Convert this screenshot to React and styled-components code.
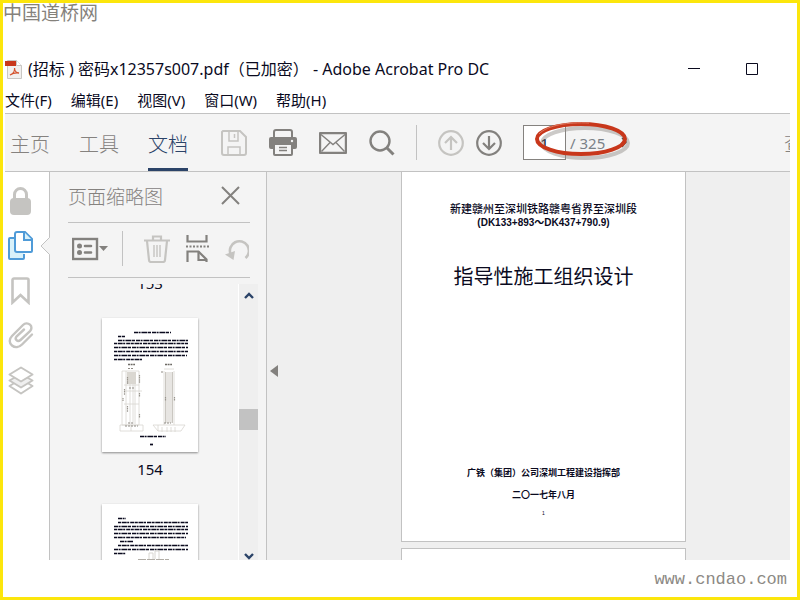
import React, {useState} from "react";
import styled, {createGlobalStyle} from "styled-components";

const GlobalStyle = createGlobalStyle`
  * {
    box-sizing: border-box;
  }
  body {
    margin: 0;
    background: white;
    font-family: "Noto Sans", "Noto Sans CJK SC", sans-serif;
    color: #0a0a1e;
  }
  button {
    font-family: inherit;
    color: inherit;
    background: none;
    border: none;
    padding: 0;
  }
  svg {
    display: block;
  }
  p, h1, h2 {
    margin: 0;
  }
`
const Frame = styled.div`
  display: flex;
  flex-direction: column;
  height: 100vh;
  border: 3px solid #fce60c;
  background: white;
`
const SiteName = styled.header`
  flex: none;
  height: 48px;
  font-size: 19px;
  line-height: 20px;
  color: #85827c;
`
const SiteUrl = styled.footer`
  flex: none;
  height: 37px;
  padding-right: 10px;
  text-align: right;
  font-family: "Liberation Mono", monospace;
  font-size: 17px;
  line-height: 40px;
  color: #8c8984;
`
const Window = styled.main`
  flex: 1;
  min-height: 0;
  display: flex;
  flex-direction: column;
  margin: 0 7px 0 2px;
`
const TitleBar = styled.div`
  display: flex;
  align-items: center;
  height: 36px;
  flex: none;
  padding-right: 9px;
`
const Title = styled.h1`
  flex: 1;
  margin-left: 5px;
  font-size: 16px;
  line-height: 34px;
  font-weight: 400;
  white-space: pre;
`
const WindowButton = styled.button`
  width: 58px;
  height: 36px;
  display: flex;
  align-items: center;
  justify-content: center;
`
const MenuBar = styled.nav`
  display: flex;
  flex: none;
  gap: 19px;
  height: 26px;
`
const MenuButton = styled.button`
  font-size: 15px;
  line-height: 26px;
`
const Toolbar = styled.div`
  display: flex;
  align-items: center;
  flex: none;
  height: 59px;
  padding-left: 5px;
  background: #f4f4f4;
  border-top: 1px solid #c2c2c2;
  border-bottom: 1px solid #c2c2c2;
`
const Tabs = styled.div`
  display: flex;
  align-self: stretch;
  gap: 29px;
  margin-right: 33px;
`
const Tab = styled.button`
  font-size: 20px;
  font-weight: 300;
  padding-top: 4px;
  color: ${({$active}) => $active ? '#2b4368' : '#85827f'};
  border-bottom: 3px solid ${({$active}) => $active ? '#2b4368' : 'transparent'};
`
const ToolGroup = styled.div`
  display: flex;
  align-items: center;
  gap: ${({$gap}) => $gap}px;
`
const IconButton = styled.button`
  position: relative;
  color: ${({$muted}) => $muted ? '#c5c4c1' : '#83817e'};
`
const Divider = styled.span`
  width: 1px;
  height: 35px;
  background: #c2c2c2;
  margin: 0 21px;
`
const PageNav = styled.label`
  position: relative;
  display: flex;
  align-items: center;
  margin-left: 21px;
  font-size: 15px;
  color: #7b8288;
`
const PageInput = styled.input`
  width: 43px;
  height: 35px;
  margin-right: 4px;
  padding: 0;
  border: 1px solid #85827f;
  background: white;
  text-align: center;
  font-family: inherit;
  font-size: 15px;
  color: #0a0a1e;
`
const Highlight = styled.svg`
  position: absolute;
  left: 8px;
  top: -6px;
  pointer-events: none;
`
const FindButton = styled.button`
  width: 6px;
  margin-left: auto;
  overflow: hidden;
  text-align: left;
  white-space: nowrap;
  font-size: 20px;
  font-weight: 300;
  color: #85827f;
`
const Body = styled.div`
  flex: 1;
  min-height: 0;
  display: flex;
`
const Rail = styled.nav`
  width: 45px;
  flex: none;
  padding-top: 6px;
  border-right: 1px solid #c2c2c2;
`
const RailButton = styled.button`
  position: relative;
  display: flex;
  align-items: center;
  justify-content: center;
  width: 31px;
  height: 45px;
  color: ${({$active}) => $active ? '#4f9bd8' : '#c5c4c1'};
`
const Notch = styled.svg`
  position: absolute;
  left: 35px;
  top: 14px;
`
const Panel = styled.aside`
  width: 217px;
  flex: none;
  display: flex;
  flex-direction: column;
  background: #f4f4f4;
  border-right: 1px solid #c2c2c2;
`
const PanelHeader = styled.div`
  display: flex;
  align-items: center;
  justify-content: space-between;
  flex: none;
  height: 51px;
  margin: 0 16px 0 18px;
  padding: 0 10px 3px 0;
  border-bottom: 1px solid #c2c2c2;
`
const PanelTitle = styled.h2`
  font-size: 19px;
  font-weight: 300;
  color: #85827f;
`
const PanelTools = styled.div`
  display: flex;
  align-items: center;
  gap: 16px;
  flex: none;
  height: 55px;
  margin: 0 16px 6px 18px;
  padding-left: 4px;
  padding-bottom: 3px;
  border-bottom: 1px solid #c2c2c2;
`
const ToolDivider = styled.span`
  width: 1px;
  height: 35px;
  background: #c2c2c2;
  margin: 0 5px 0 -2px;
`
const PanelContent = styled.div`
  flex: 1;
  min-height: 0;
  display: flex;
  padding-right: 8px;
`
const ThumbList = styled.div`
  flex: 1;
  overflow: hidden;
  padding-left: 12px;
`
const ThumbTrack = styled.div`
  display: flex;
  flex-direction: column;
  align-items: center;
  margin-top: -18px;
`
const ThumbPage = styled.div`
  width: 96px;
  height: 134px;
  flex: none;
  background: white;
  box-shadow: 0 1px 2px #8a8a8a;
`
const ThumbLabel = styled.p`
  height: 52px;
  flex: none;
  padding-top: 6px;
  font-size: 15px;
  line-height: 22px;
`
const ScrollBar = styled.div`
  display: flex;
  flex-direction: column;
  width: 20px;
  background: #efefef;
  border-left: 1px solid white;
  color: #2b4368;
`
const ScrollButton = styled.button`
  display: flex;
  justify-content: center;
  align-items: center;
  height: ${({$end}) => $end ? 8 : 22}px;
`
const ScrollSpace = styled.div`
  flex: ${({$size}) => $size};
`
const ScrollThumb = styled.div`
  height: 21px;
  background: #c2c2c2;
`
const Viewer = styled.section`
  flex: 1;
  min-width: 0;
  display: flex;
  background: #efefef;
`
const CollapseButton = styled.button`
  width: 30px;
  flex: none;
  padding: 10px 0 0 3px;
  color: #83817e;
`
const Pages = styled.div`
  flex: 1;
  display: flex;
  flex-direction: column;
  align-items: center;
  gap: 6px;
  overflow: hidden;
`
const Page = styled.article`
  width: 285px;
  height: 370px;
  flex: none;
  background: white;
  border: 1px solid #c2c2c2;
  border-top-width: ${({$first}) => $first ? 0 : 1}px;
  text-align: center;
`
const PageLine = styled.p`
  font-family: "Liberation Sans", "Noto Sans CJK SC", sans-serif;
  font-size: ${({$size}) => $size}px;
  line-height: 14px;
  font-weight: ${({$bold}) => $bold ? 700 : 500};
  margin-top: ${({$top}) => $top || 0}px;
`
const PageHeading = styled.h2`
  margin-top: 32px;
  font-family: "Noto Sans CJK SC", sans-serif;
  font-size: 20px;
  line-height: 28px;
  font-weight: 400;
`

const PdfIcon = () => (
    <svg width="18" height="19" viewBox="0 0 18 19">
        <path d="M2.500 .5h9l5 5v13h-14z" fill="#f1f0ef" stroke="#c9c7c4"/>
        <path d="M11.500 .5v5h5" fill="white" stroke="#c9c7c4"/>
        <path d="M0 1h11v5H0z" fill="#c8371b"/>
        <path d="M5 15c3-1 5-4 4.500-7 0 3 2 5 4.500 5-3-.4-6 0-9 2z" fill="none" stroke="#d4532f" strokeWidth="1.300"/>
    </svg>
)

const SaveIcon = () => (
    <svg width="26" height="26" viewBox="0 0 26 26" fill="none" stroke="currentColor" strokeWidth="2">
        <path d="M2 1h17l6 6v16a2 2 0 0 1-2 2H3a2 2 0 0 1-2-2V2z"/>
        <path d="M8 1v10h9V1M13.500 4v4" strokeWidth="1.500"/>
        <path d="M7 25v-8h12v8" strokeWidth="1.500"/>
    </svg>
)

const PrintIcon = () => (
    <svg width="28" height="28" viewBox="0 0 28 28">
        <path d="M5 10V3a2 2 0 0 1 2-2h14a2 2 0 0 1 2 2v7" fill="none" stroke="currentColor" strokeWidth="2"/>
        <path d="M2 8h24a2 2 0 0 1 2 2v8a2 2 0 0 1-2 2H2a2 2 0 0 1-2-2v-8a2 2 0 0 1 2-2z" fill="currentColor"/>
        <path d="M5 15h18v10a1 1 0 0 1-1 1H6a1 1 0 0 1-1-1z" fill="#f4f4f4" stroke="currentColor" strokeWidth="2"/>
        <path d="M10 18.500h8M10 21.500h8" stroke="currentColor" strokeWidth="1.500"/>
        <circle cx="23" cy="12" r="1.200" fill="#f4f4f4"/>
    </svg>
)

const MailIcon = () => (
    <svg width="28" height="22" viewBox="0 0 28 22" fill="none" stroke="currentColor">
        <rect x="1" y="1" width="26" height="20" rx="1" strokeWidth="2.400"/>
        <path d="M2 2.500l12 10 12-10M2.500 19.500l8.500-9M25.500 19.500l-8.500-9" strokeWidth="1.400"/>
    </svg>
)

const SearchIcon = () => (
    <svg width="26" height="26" viewBox="0 0 26 26" fill="none" stroke="currentColor">
        <circle cx="11" cy="11" r="9.500" strokeWidth="2.400"/>
        <path d="M17.500 17.500l7 7" strokeWidth="3"/>
    </svg>
)

const ArrowIcon = ({down}) => (
    <svg width="26" height="26" viewBox="0 0 26 26" fill="none" stroke="currentColor" strokeWidth="2.200">
        <circle cx="13" cy="13" r="11.800"/>
        {down
            ? <path d="M13 6v13M7 13l6 6 6-6"/>
            : <path d="M13 20V7M7 13l6-6 6 6"/>}
    </svg>
)

const LockIcon = () => (
    <svg width="21" height="28" viewBox="0 0 21 28">
        <path d="M4.500 13V7.500a6 6 0 0 1 12 0V13" fill="none" stroke="currentColor" strokeWidth="3"/>
        <rect y="11" width="21" height="17" rx="4" fill="currentColor"/>
    </svg>
)

const PagesIcon = () => (
    <svg width="25" height="29" viewBox="0 0 25 29" fill="none" stroke="currentColor" strokeWidth="2">
        <path d="M6 7H2a1 1 0 0 0-1 1v19a1 1 0 0 0 1 1h13a1 1 0 0 0 1-1v-4" fill="#d8f1fa"/>
        <path d="M9 1h8l7 7v12a1 1 0 0 1-1 1H9a2 2 0 0 1-2-2V3a2 2 0 0 1 2-2z" fill="white"/>
        <path d="M16 1v8h8" fill="#d8f1fa"/>
    </svg>
)

const BookmarkIcon = () => (
    <svg width="19" height="28" viewBox="0 0 19 28" fill="none" stroke="currentColor" strokeWidth="2.600">
        <path d="M3 1.500h13a1.500 1.500 0 0 1 1.500 1.500v22.500l-8-7.500-8 7.500V3A1.500 1.500 0 0 1 3 1.500z"/>
    </svg>
)

const ClipIcon = () => (
    <svg width="26" height="28" viewBox="0 0 26 28" fill="none" stroke="currentColor" strokeWidth="2.400" strokeLinecap="round">
        <path d="M24 12.500l-10 10c-3 3-7 3.500-10 1s-3-6.500 0-9.500L15 3c2-2 5-2 7-.3s1.800 4.600 0 6.500L12.500 18c-1.300 1.200-3 1.200-4 .2s-1-2.600.2-3.900L16 7.500"/>
    </svg>
)

const LayersIcon = () => (
    <svg width="26" height="29" viewBox="0 0 26 29" fill="white" stroke="currentColor" strokeWidth="2" strokeLinejoin="round">
        <path d="M1.500 20L13 13l11.500 7L13 27.500z"/>
        <path d="M1.500 14.500L13 8l11.500 6.500L13 21.500z" fill="#efefef"/>
        <path d="M1.500 8.500L13 1.500l11.500 7L13 15.500z"/>
    </svg>
)

const OptionsIcon = () => (
    <svg width="36" height="24" viewBox="0 0 36 24">
        <rect x="1" y="2" width="24" height="20" fill="none" stroke="currentColor" strokeWidth="2.400"/>
        <circle cx="7.500" cy="9" r="2.500" fill="currentColor"/>
        <circle cx="7.500" cy="15.500" r="2.500" fill="currentColor"/>
        <path d="M13 9h6M13 15.500h6" stroke="currentColor" strokeWidth="2.600" strokeLinecap="round"/>
        <path d="M27 9h9l-4.500 5z" fill="currentColor"/>
    </svg>
)

const TrashIcon = () => (
    <svg width="26" height="28" viewBox="0 0 26 28" fill="none" stroke="currentColor" strokeWidth="2.200">
        <path d="M0 5.500h26M9 5V1.500h8V5"/>
        <path d="M3 6l2 19a2 2 0 0 0 2 2h12a2 2 0 0 0 2-2l2-19"/>
        <path d="M10 10v12M13 10v12M16 10v12" strokeWidth="1.400"/>
    </svg>
)

const SplitIcon = () => (
    <svg width="23" height="27" viewBox="0 0 23 27" fill="none" stroke="currentColor" strokeWidth="2.200">
        <path d="M1.500 0v6.500h19V0"/>
        <path d="M0 11.500h23" strokeDasharray="2 1.500" strokeWidth="2"/>
        <path d="M1.500 27V16.500h11l8 8V27"/>
        <path d="M12.500 16.500V25h8.500"/>
    </svg>
)

const UndoIcon = () => (
    <svg width="24" height="24" viewBox="0 0 24 24">
        <path d="M5.500 17A9.500 9.500 0 1 1 20.500 21" fill="none" stroke="currentColor" strokeWidth="2.600"/>
        <path d="M0 17.500l10-3.500-1.500 9z" fill="currentColor"/>
    </svg>
)

const Chevron = ({down}) => (
    <svg width="10" height="7" viewBox="0 0 10 7" fill="none" stroke="currentColor" strokeWidth="2.400">
        <path d={down ? "M1 1l4 4 4-4" : "M1 6l4-4 4 4"}/>
    </svg>
)

// rows of greeked text: [x, y, width]
const pageRows = [
    [32, 14, 37], [16, 18, 7], [16, 22, 70], [12, 25, 74], [12, 29, 74],
    [12, 33, 74], [12, 37, 73], [12, 41, 28], [38, 118, 26], [48, 126, 3],
]
const nextRows = [
    [16, 14, 8], [16, 18, 70], [12, 22, 74], [12, 25, 74], [12, 29, 74],
    [12, 33, 72], [18, 37, 13], [16, 41, 70], [12, 45, 74], [12, 49, 12],
]

const Rows = ({rows}) => rows.map(([x, y, width], i) => (
    <g key={y} stroke="#0a0a1e">
        <path d={`M${x} ${y}.5h${width}`} strokeWidth="1.700" strokeDasharray={i % 2 ? "3 .7 5 .5 2 1 4 .6" : "4 .6 2 .8 6 .6 3 1"}/>
    </g>
))

const PierDrawing = () => (
    <svg width="96" height="134" viewBox="0 0 96 134" fill="none">
        <Rows rows={pageRows}/>
        <path d="M26 46.500h7M63 46.500h7" stroke="#6d6a64" strokeWidth="1.500" strokeDasharray="2 .6"/>
        <g stroke="#d8d6d1" strokeWidth=".8">
            <path d="M20 53v54h17V53zM24 53v54M28 66v40M31 66v40M33 60v46M18 107h23v6H18zM29 107v6M22 73h18M22 67h15M22 86h15"/>
            <path d="M51 107h32l-4 6H56zM56 107v6M60 109v5M65 109v5M69 109v5M73 109v5M62 51h10M62 53v54M72 53v54"/>
        </g>
        <path d="M25 54h9v12h-9z" fill="#dad7d1"/>
        <path d="M64 54h6v51h-6z" fill="#e7e5e2"/>
        <path d="M63.500 54v51M70.500 54v51" stroke="#cac7c1"/>
        <path d="M25.500 59v7M22.500 71v6M25.500 88v6M37.500 57v8M37.500 75v4M37.500 96v4M63.500 79v4M72.500 79v4M21 80v3" stroke="#99958e" strokeWidth="1.200" strokeDasharray="1.500 .6"/>
        <path d="M26 50.500h6M23 108h13M62 105h7M26 105h5M59 54h2M27 70h5" stroke="#8f8b85" strokeDasharray="2 1"/>
    </svg>
)

const NextDrawing = () => (
    <svg width="96" height="134" viewBox="0 0 96 134" fill="none">
        <Rows rows={nextRows}/>
        <path d="M47 55v-6h4v6M53 55v-8h4v8" stroke="#d8d6d1"/>
        <path d="M36 55.500h31" stroke="#b1ada6" strokeDasharray="8 1"/>
    </svg>
)

const menus = ['文件(F)', '编辑(E)', '视图(V)', '窗口(W)', '帮助(H)']
const tabs = ['主页', '工具', '文档']
const railItems = [
    {name: '安全性', Icon: LockIcon},
    {name: '页面缩略图', Icon: PagesIcon},
    {name: '书签', Icon: BookmarkIcon},
    {name: '附件', Icon: ClipIcon},
    {name: '图层', Icon: LayersIcon},
]

export default function App() {

    const [tab, setTab] = useState('文档');
    const [panel, setPanel] = useState('页面缩略图');
    const [page, setPage] = useState('1');

    return (<>
            <GlobalStyle/>
            <Frame>
                <SiteName>中国道桥网</SiteName>
                <Window>
                    <TitleBar>
                        <PdfIcon/>
                        <Title>(招标 ) 密码x12357s007.pdf（已加密） - Adobe Acrobat Pro DC</Title>
                        <WindowButton aria-label="最小化">
                            <svg width="12" height="12"><path d="M0 5.500h12" stroke="#0a0a1e"/></svg>
                        </WindowButton>
                        <WindowButton aria-label="最大化">
                            <svg width="12" height="12"><path d="M.5 .5h11v11H.5z" fill="none" stroke="#0a0a1e"/></svg>
                        </WindowButton>
                    </TitleBar>
                    <MenuBar>
                        {menus.map((menu) => <MenuButton key={menu}>{menu}</MenuButton>)}
                    </MenuBar>
                    <Toolbar>
                        <Tabs>
                            {tabs.map((name) => (
                                <Tab key={name} $active={name === tab} onClick={() => setTab(name)}>{name}</Tab>
                            ))}
                        </Tabs>
                        <ToolGroup $gap={22}>
                            <IconButton $muted aria-label="保存"><SaveIcon/></IconButton>
                            <IconButton aria-label="打印"><PrintIcon/></IconButton>
                            <IconButton aria-label="邮件"><MailIcon/></IconButton>
                            <IconButton aria-label="搜索"><SearchIcon/></IconButton>
                        </ToolGroup>
                        <Divider/>
                        <ToolGroup $gap={12}>
                            <IconButton $muted aria-label="上一页"><ArrowIcon/></IconButton>
                            <IconButton aria-label="下一页"><ArrowIcon down/></IconButton>
                        </ToolGroup>
                        <PageNav>
                            <PageInput
                                type="text"
                                name="page"
                                value={page}
                                onChange={(e) => setPage(e.target.value)}
                            />
                            / 325
                            <Highlight width="102" height="42" viewBox="0 0 102 42" fill="none">
                                <ellipse cx="54" cy="24" rx="43" ry="15" stroke="#8d8a84" strokeOpacity=".45" strokeWidth="4"/>
                                <path d="M91 19l4 4-4 5" stroke="#55524e" strokeWidth="1.500"/>
                                <ellipse cx="50" cy="20" rx="44" ry="15" stroke="#c8371b" strokeWidth="4"/>
                                <path d="M8 15c8-9 30-12 50-11" stroke="#dc7a62" strokeWidth="1"/>
                            </Highlight>
                        </PageNav>
                        <FindButton>查</FindButton>
                    </Toolbar>
                    <Body>
                        <Rail>
                            {railItems.map(({name, Icon}) => (
                                <RailButton key={name} aria-label={name} $active={name === panel} onClick={() => setPanel(name)}>
                                    <Icon/>
                                    {name === panel && (
                                        <Notch width="10" height="18" viewBox="0 0 10 18">
                                            <path d="M10 0L1 9l9 9z" fill="#f4f4f4"/>
                                            <path d="M9.500 0v.5L1 9l8.500 8.500v.5" fill="none" stroke="#c2c2c2"/>
                                        </Notch>
                                    )}
                                </RailButton>
                            ))}
                        </Rail>
                        <Panel>
                            <PanelHeader>
                                <PanelTitle>页面缩略图</PanelTitle>
                                <IconButton aria-label="关闭">
                                    <svg width="19" height="19" viewBox="0 0 19 19">
                                        <path d="M1 1l17 17M18 1L1 18" stroke="currentColor" strokeWidth="2"/>
                                    </svg>
                                </IconButton>
                            </PanelHeader>
                            <PanelTools>
                                <IconButton aria-label="选项"><OptionsIcon/></IconButton>
                                <ToolDivider/>
                                <IconButton $muted aria-label="删除"><TrashIcon/></IconButton>
                                <IconButton aria-label="拆分"><SplitIcon/></IconButton>
                                <IconButton $muted aria-label="旋转"><UndoIcon/></IconButton>
                            </PanelTools>
                            <PanelContent>
                                <ThumbList>
                                    <ThumbTrack>
                                        <ThumbLabel>153</ThumbLabel>
                                        <ThumbPage><PierDrawing/></ThumbPage>
                                        <ThumbLabel>154</ThumbLabel>
                                        <ThumbPage><NextDrawing/></ThumbPage>
                                    </ThumbTrack>
                                </ThumbList>
                                <ScrollBar>
                                    <ScrollButton aria-label="向上滚动"><Chevron/></ScrollButton>
                                    <ScrollSpace $size={103}/>
                                    <ScrollThumb/>
                                    <ScrollSpace $size={122}/>
                                    <ScrollButton $end aria-label="向下滚动"><Chevron down/></ScrollButton>
                                </ScrollBar>
                            </PanelContent>
                        </Panel>
                        <Viewer>
                            <CollapseButton aria-label="折叠">
                                <svg width="8" height="12"><path d="M8 0v12L0 6z" fill="currentColor"/></svg>
                            </CollapseButton>
                            <Pages>
                                <Page $first>
                                    <PageLine $size={11} $top={30}>新建赣州至深圳铁路赣粤省界至深圳段</PageLine>
                                    <PageLine $size={10} $bold>(DK133+893～DK437+790.9)</PageLine>
                                    <PageHeading>指导性施工组织设计</PageHeading>
                                    <PageLine $size={9} $bold $top={176}>广铁（集团）公司深圳工程建设指挥部</PageLine>
                                    <PageLine $size={9} $bold $top={8}>二〇一七年八月</PageLine>
                                    <PageLine $size={5} $top={4}>1</PageLine>
                                </Page>
                                <Page/>
                            </Pages>
                        </Viewer>
                    </Body>
                </Window>
                <SiteUrl>www.cndao.com</SiteUrl>
            </Frame>
        </>
    )
}
